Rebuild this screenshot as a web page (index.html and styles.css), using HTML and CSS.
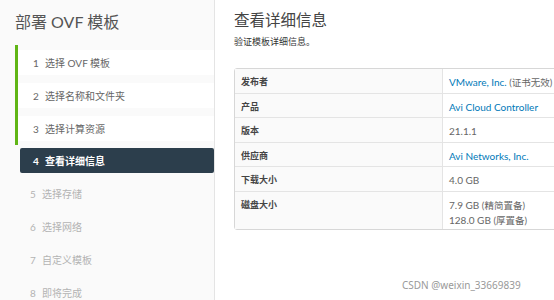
FILE: index.html
```html
<!DOCTYPE html>
<html lang="zh-CN">

<head>
   <meta charset="UTF-8">
   <meta name="viewport" content="width=device-width, initial-scale=1.0">
   <title>部署 OVF 模板</title>
   <link rel="stylesheet" href="styles.css">
</head>

<body>
   <div class="wizard">
       <!-- Left step navigation -->
       <div class="sidebar">
           <h1 class="wizard-title">部署 OVF 模板</h1>
           <div class="steps">
               <div class="done-group">
                   <div class="step done"><span class="num">1</span>选择 OVF 模板</div>
                   <div class="step done"><span class="num">2</span>选择名称和文件夹</div>
                   <div class="step done"><span class="num">3</span>选择计算资源</div>
               </div>
               <div class="step active"><span class="num">4</span>查看详细信息</div>
               <div class="step todo"><span class="num">5</span>选择存储</div>
               <div class="step todo"><span class="num">6</span>选择网络</div>
               <div class="step todo"><span class="num">7</span>自定义模板</div>
               <div class="step todo"><span class="num">8</span>即将完成</div>
           </div>
       </div>

       <!-- Page content -->
       <div class="content">
           <h2 class="page-title">查看详细信息</h2>
           <p class="page-desc">验证模板详细信息。</p>

           <table class="details">
               <tr>
                   <th>发布者</th>
                   <td><a href="#">VMware, Inc.</a> <span class="cn">(证书无效)</span></td>
               </tr>
               <tr>
                   <th>产品</th>
                   <td><a href="#">Avi Cloud Controller</a></td>
               </tr>
               <tr>
                   <th>版本</th>
                   <td>21.1.1</td>
               </tr>
               <tr>
                   <th>供应商</th>
                   <td><a href="#">Avi Networks, Inc.</a></td>
               </tr>
               <tr>
                   <th>下载大小</th>
                   <td>4.0 GB</td>
               </tr>
               <tr class="tall">
                   <th>磁盘大小</th>
                   <td>7.9 GB <span class="cn">(精简置备)</span><br>128.0 GB <span class="cn">(厚置备)</span></td>
               </tr>
           </table>
       </div>
   </div>

   <div class="watermark">CSDN @weixin_33669839</div>
</body>

</html>
```

FILE: styles.css
```css
body {
    margin: 0;
    width: 554px;
    height: 300px;
    overflow: hidden;
    font-family: Lato, "Noto Sans CJK SC", sans-serif;
    color: #333;
    background-color: #fff;
}

.wizard {
    display: flex;
    height: 300px;
}

/* Left step navigation */
.sidebar {
    width: 214px;
    flex-shrink: 0;
    background-color: #fafafa;
    border-right: 1px solid #e4e4e4;
}

.wizard-title {
    margin: 0 0 0 15px;
    padding-top: 11px;
    font-size: 16px;
    font-weight: 400;
    line-height: 22px;
    color: #555;
}

.steps {
    margin-top: 12px;
    margin-left: 15px;
}

.done-group {
    border-left: 3px solid #60b515;
    padding: 5px 0 4px;
}

.step {
    display: flex;
    align-items: center;
    height: 25px;
    font-size: 10px;
    padding-left: 15px;
    margin-bottom: 8px;
}

.step .num {
    width: 12px;
}

.step.done {
    background-color: #fff;
    color: #666;
}

.step.done:last-child {
    margin-bottom: 0;
}

.step.active {
    margin: 3px 0 8px 5px;
    padding-left: 13px;
    background-color: #2c3e4c;
    color: #fff;
    font-weight: 700;
    border-radius: 2px;
}

.step.todo {
    color: #b3b3b3;
}

/* Page content */
.content {
    padding-left: 19px;
    flex-grow: 1;
}

.page-title {
    margin: 10px 0 0;
    font-size: 15.5px;
    font-weight: 400;
    line-height: 20px;
    color: #444;
}

.page-desc {
    margin: 6px 0 0;
    font-size: 9px;
    line-height: 12px;
    color: #333;
}

.details {
    margin-top: 20px;
    width: 340px;
    border-collapse: separate;
    border-spacing: 0;
    border: 1px solid #d7d7d7;
    border-radius: 3px;
    font-size: 9px;
}

.details th,
.details td {
    height: 24.5px;
    box-sizing: border-box;
    padding: 6px 6px 0;
    text-align: left;
    vertical-align: top;
    line-height: 14px;
    border-bottom: 1px solid #e4e4e4;
}

.details tr:last-child th,
.details tr:last-child td {
    border-bottom: none;
}

.details th {
    width: 208px;
    background-color: #fafafa;
    font-weight: 700;
    color: #444;
    border-right: 1px solid #e4e4e4;
}

.details td {
    font-size: 10px;
    color: #666;
}

.details td .cn {
    font-size: 9.5px;
}

.details a {
    color: #0079b8;
    text-decoration: none;
}

.details .tall th,
.details .tall td {
    height: 37px;
}

.watermark {
    position: absolute;
    left: 402px;
    top: 278px;
    font-family: "Noto Sans", sans-serif;
    font-size: 10px;
    color: #999;
}
```
